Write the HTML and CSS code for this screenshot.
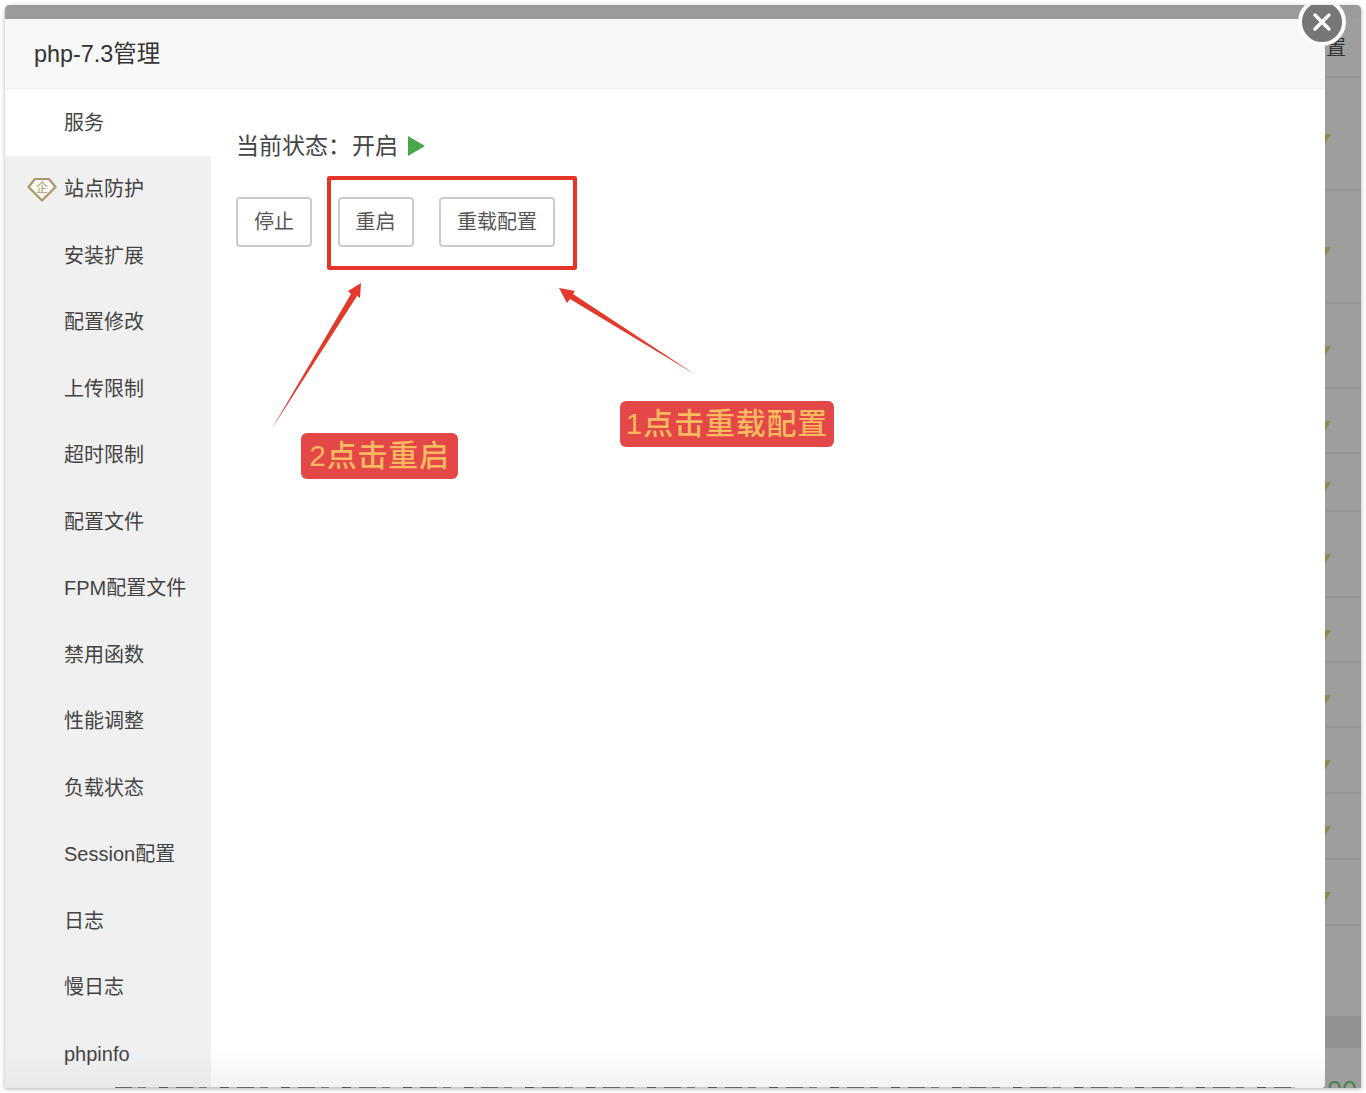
FILE: index.html
```html
<!DOCTYPE html>
<html lang="zh-CN">
<head>
  <meta charset="UTF-8">
  <meta name="viewport" content="width=device-width, initial-scale=1.0">
  <link rel="stylesheet" href="styles.css">
  <title>php-7.3管理</title>
</head>
<body>
<div class="janela">
  <div class="topo"></div>
  <div class="corpo">
    <div class="modal">
      <div class="titulo">php-7.3管理</div>
      <div class="conteudo">
        <ul class="menu">
          <li class="ativo">服务</li>
          <li>
            <span class="diamante">
              <svg width="30" height="25" viewBox="0 0 30 25">
                <path d="M8 2H22L28.500 10 15 23.500 1.500 10Z" fill="#fbf8f2" stroke="#ab956d" stroke-width="2.200" stroke-linejoin="round"/>
              </svg>
              <b class="qi">企</b>
            </span>
            站点防护
          </li>
          <li>安装扩展</li>
          <li>配置修改</li>
          <li>上传限制</li>
          <li>超时限制</li>
          <li>配置文件</li>
          <li>FPM配置文件</li>
          <li>禁用函数</li>
          <li>性能调整</li>
          <li>负载状态</li>
          <li>Session配置</li>
          <li>日志</li>
          <li>慢日志</li>
          <li>phpinfo</li>
        </ul>
        <div class="painel">
          <p class="status">当前状态：<span class="valor">开启</span><span class="play"></span></p>
          <div class="botoes">
            <button class="botao">停止</button>
            <button class="botao">重启</button>
            <button class="botao">重载配置</button>
          </div>
        </div>
      </div>
    </div>
    <div class="fundo">
      <div class="linha h59"></div>
      <div class="linha h113"><i class="seta"></i></div>
      <div class="linha h113"><i class="seta"></i></div>
      <div class="linha h85"><i class="seta"></i></div>
      <div class="linha h65"><i class="seta"></i></div>
      <div class="linha h58"><i class="seta"></i></div>
      <div class="linha h86"><i class="seta"></i></div>
      <div class="linha h65"><i class="seta"></i></div>
      <div class="linha h65"><i class="seta"></i></div>
      <div class="linha h66"><i class="seta"></i></div>
      <div class="linha h66"><i class="seta"></i></div>
      <div class="linha h66"><i class="seta"></i></div>
      <div class="faixa"></div>
    </div>
  </div>

  <!-- por cima do modal -->
  <span class="letra">置</span>
  <span class="zeros">00</span>
  <div class="restos"></div>
  <div class="fechar">
    <svg width="20" height="20" viewBox="0 0 20 20"><path d="M3 3 17 17M17 3 3 17" stroke="#fff" stroke-width="3.400" stroke-linecap="round"/></svg>
  </div>
</div>

<div class="caixa"></div>
<svg class="setas" width="1366" height="1093" viewBox="0 0 1366 1093">
  <path d="M271 430 351 294 348 291 361 283 360 298 357 296Z" fill="#e3392b"/>
  <path d="M696 375 570 299 567 303 559 288 575 291 573 294Z" fill="#e3392b"/>
</svg>
<div class="nota nota-2">2点击重启</div>
<div class="nota nota-1">1点击重载配置</div>
</body>
</html>
```

FILE: styles.css
```css
*{
  margin: 0;
  padding: 0;
  box-sizing: border-box;
}
body{
  width: 1366px;
  height: 1093px;
  background-color: #fff;
  font-family: "Liberation Sans", "Noto Sans CJK SC", sans-serif;
  color: #444;
  overflow: hidden;
  position: relative;
}
.janela{
  position: absolute;
  top: 5px;
  left: 5px;
  width: 1356px;
  height: 1083px;
  border-radius: 5px 5px 0 0;
  background-color: #9e9e9e;
  box-shadow: 0 1px 4px rgba(0, 0, 0, 0.3);
  overflow: hidden;
}
.topo{
  height: 14px;
  background-color: #9b9b9b;
}
.corpo{
  display: flex;
  height: 1069px;
}
.modal{
  width: 1320px;
  display: flex;
  flex-direction: column;
  background-color: #fff;
  border-radius: 0 0 4px 0;
  overflow: hidden;
}
.titulo{
  height: 70px;
  padding-left: 29px;
  line-height: 70px;
  font-size: 23.400px;
  color: #333;
  background-color: #f8f8f8;
  border-bottom: 1px solid #eee;
}
.conteudo{
  flex: 1;
  display: flex;
  background-image: linear-gradient(to bottom, rgba(0, 0, 0, 0) 96%, rgba(0, 0, 0, 0.05) 100%);
}
.menu{
  width: 206px;
  list-style: none;
  background-image: linear-gradient(to bottom, #f0f0f0 96%, #e9e9e9 100%);
}
.menu li{
  height: 66.500px;
  line-height: 66.500px;
  padding-top: 0.500px;
  padding-left: 59px;
  font-size: 20px;
  color: #444;
  position: relative;
}
.menu .ativo{
  background-color: #fff;
}
.diamante{
  position: absolute;
  left: 22px;
  top: 21px;
  width: 30px;
  height: 25px;
  display: flex;
}
.qi{
  position: absolute;
  left: 9px;
  top: 4px;
  font-size: 12px;
  line-height: 14px;
  font-weight: normal;
  color: #b09a73;
}
.painel{
  flex: 1;
  padding: 39px 25px;
}
.status{
  display: flex;
  align-items: center;
  height: 32px;
  font-size: 23px;
  color: #444;
}
.valor{
  margin-left: 1px;
}
.play{
  width: 0;
  height: 0;
  margin-left: 10px;
  margin-top: 4px;
  border-left: 17px solid #4aa64a;
  border-top: 10px solid transparent;
  border-bottom: 10px solid transparent;
}
.botoes{
  display: flex;
  margin-top: 37px;
  gap: 25.500px;
}
.botao{
  height: 50px;
  padding: 0 16px 3px;
  font-family: inherit;
  font-size: 20px;
  color: #555;
  background-color: #fff;
  border: 2px solid #ccc;
  border-radius: 4px;
  cursor: pointer;
}
.botao:hover{
  background-color: #eee;
}
.fundo{
  flex: 1;
  position: relative;
}
.linha{
  position: relative;
  border-bottom: 2px solid #959595;
}
.h59{ height: 59px; }
.h113{ height: 113px; }
.h85{ height: 85px; }
.h65{ height: 65px; }
.h58{ height: 58px; }
.h86{ height: 86px; }
.h66{ height: 66px; }
.seta{
  position: absolute;
  left: 0;
  top: 50%;
  width: 0;
  height: 0;
  border-top: 10px solid #8f8a50;
  border-right: 6px solid transparent;
}
.faixa{
  position: absolute;
  left: 0;
  right: 0;
  top: 997px;
  height: 32px;
  background-color: #929292;
}
.letra{
  position: absolute;
  top: 32px;
  left: 1321px;
  font-size: 20px;
  line-height: 22px;
  color: #333;
}
.zeros{
  position: absolute;
  left: 1322px;
  bottom: 0;
  height: 8px;
  overflow: hidden;
  font-size: 27px;
  line-height: 22px;
  color: #557f55;
}
.restos{
  position: absolute;
  left: 110px;
  width: 1180px;
  bottom: 0;
  height: 1px;
  background-image: repeating-linear-gradient(to right, #666 0 17px, #b5b5b5 17px 23px, #777 23px 31px, #ccc 31px 44px, #555 44px 53px, #bbb 53px 61px);
}
.fechar{
  position: absolute;
  top: -7px;
  left: 1293px;
  width: 48px;
  height: 48px;
  display: flex;
  align-items: center;
  justify-content: center;
  background-color: #777;
  border: 4px solid #fff;
  border-radius: 50%;
}
.caixa{
  position: absolute;
  top: 176px;
  left: 327px;
  width: 250px;
  height: 94px;
  border: 4px solid #e5352b;
  border-radius: 2px;
}
.setas{
  position: absolute;
  top: 0;
  left: 0;
  pointer-events: none;
}
.nota{
  position: absolute;
  background-color: #e34747;
  color: #fdb95f;
  border-radius: 6px;
  font-size: 30px;
  font-weight: 500;
  letter-spacing: 0.800px;
  text-align: center;
  white-space: nowrap;
}
.nota-2{
  top: 433px;
  left: 301px;
  width: 157px;
  height: 46px;
  line-height: 46px;
}
.nota-1{
  top: 401px;
  left: 620px;
  width: 214px;
  height: 46px;
  line-height: 46px;
}
```
